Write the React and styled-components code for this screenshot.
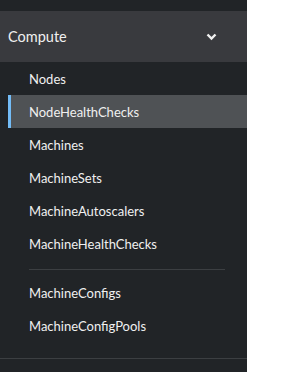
import styled, { createGlobalStyle } from 'styled-components';

const Global = createGlobalStyle`
  body {
    margin: 0;
    background: #ffffff;
    font-family: Lato, 'Open Sans', sans-serif;
  }
`;

const Sidebar = styled.nav`
  width: 247px;
  height: 372px;
  background: #212427;
  padding-top: 11px;
  box-sizing: border-box;
  display: flex;
  flex-direction: column;
`;

const SectionToggle = styled.div`
  height: 51px;
  background: #393a3e;
  display: flex;
  align-items: center;
  justify-content: space-between;
  padding: 0 30px 0 8px;
  color: #f0f0f0;
  font-size: 14.5px;
`;

const SubList = styled.ul`
  list-style: none;
  margin: 0;
  padding: 0 0 0 8px;
  display: flex;
  flex-direction: column;
  border-bottom: 1px solid #3c3f42;
`;

const Item = styled.li`
  height: 33px;
  display: flex;
  align-items: center;
  padding-left: 18px;
  font-size: 13px;
  color: #f0f0f0;
  background: ${(p) => (p.$active ? '#4f5255' : 'transparent')};
  border-left: 3px solid ${(p) => (p.$active ? '#73bcf7' : 'transparent')};
`;

const Divider = styled.li`
  height: 1px;
  background: #3c3f42;
  margin: 9px 22px 6px 21px;
`;

const Spacer = styled.li`
  height: 16px;
`;

const Chevron = () => (
  <svg width="11" height="8" viewBox="0 0 11 8">
    <path d="M1.5 1.5 L5.5 5.5 L9.5 1.5" stroke="#f0f0f0" strokeWidth="2.4" fill="none" />
  </svg>
);

const groupOne = [
  'Nodes',
  'NodeHealthChecks',
  'Machines',
  'MachineSets',
  'MachineAutoscalers',
  'MachineHealthChecks',
];
const groupTwo = ['MachineConfigs', 'MachineConfigPools'];

export default function App() {
  return (
    <>
      <Global />
      <Sidebar>
        <SectionToggle>
          <span>Compute</span>
          <Chevron />
        </SectionToggle>
        <SubList>
          {groupOne.map((n) => (
            <Item key={n} $active={n === 'NodeHealthChecks'}>
              {n}
            </Item>
          ))}
          <Divider />
          {groupTwo.map((n) => (
            <Item key={n}>{n}</Item>
          ))}
          <Spacer />
        </SubList>
      </Sidebar>
    </>
  );
}
